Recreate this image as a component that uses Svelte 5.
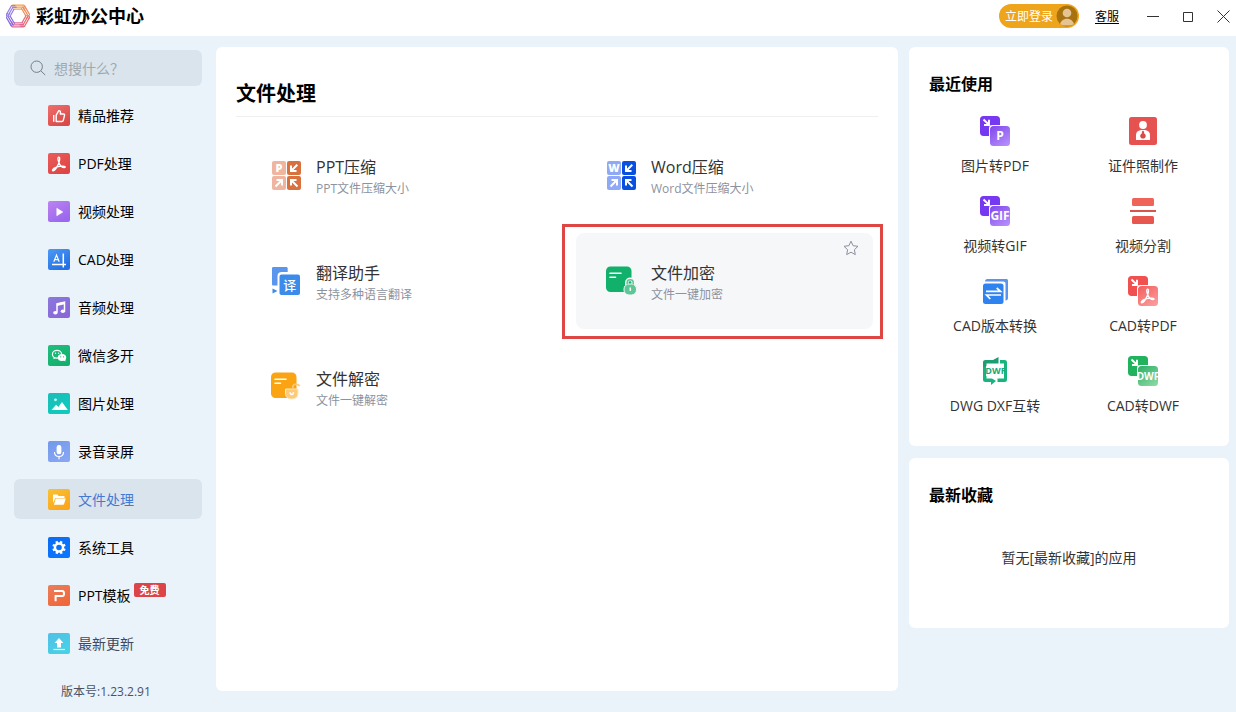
<script>
  const nav = [
    { id: 'like', label: '精品推荐', from: '#f0706c', to: '#d9494a' },
    { id: 'pdf', label: 'PDF处理', from: '#e85d5b', to: '#e04545' },
    { id: 'video', label: '视频处理', from: '#bd83f0', to: '#9a67ee' },
    { id: 'cad', label: 'CAD处理', from: '#4c9af5', to: '#2470e4' },
    { id: 'music', label: '音频处理', from: '#8a78dd', to: '#8a68d8' },
    { id: 'wechat', label: '微信多开', from: '#22bd80', to: '#12b06c' },
    { id: 'image', label: '图片处理', from: '#1cbcb8', to: '#0fcbbd' },
    { id: 'mic', label: '录音录屏', from: '#7399ea', to: '#86a6f4' },
    { id: 'folder', label: '文件处理', from: '#f8c234', to: '#fba51a' },
    { id: 'gear', label: '系统工具', from: '#0a6cf2', to: '#0a76ff' },
    { id: 'ppt', label: 'PPT模板', from: '#ea7e5c', to: '#f0673a', badge: '免费' },
    { id: 'update', label: '最新更新', from: '#52bfe6', to: '#46d2e6', muted: true }
  ];
  const tools = [
    { id: 'pptzip', title: 'PPT压缩', note: 'PPT文件压缩大小' },
    { id: 'wordzip', title: 'Word压缩', note: 'Word文件压缩大小' },
    { id: 'translate', title: '翻译助手', note: '支持多种语言翻译' },
    { id: 'lock', title: '文件加密', note: '文件一键加密', marked: true },
    { id: 'unlock', title: '文件解密', note: '文件一键解密' }
  ];
  const recent = [
    { id: 'pair', label: '图片转PDF', back: '#7638f0', from: '#8046ea', to: '#b18bfa', tag: 'P', size: 12 },
    { id: 'photo', label: '证件照制作' },
    { id: 'pair', label: '视频转GIF', back: '#7638f0', from: '#8046ea', to: '#b18bfa', tag: 'GIF', size: 12 },
    { id: 'split', label: '视频分割' },
    { id: 'version', label: 'CAD版本转换' },
    { id: 'pair', label: 'CAD转PDF', back: '#f0504f', from: '#f25c5c', to: '#fa9a98' },
    { id: 'swap', label: 'DWG DXF互转' },
    { id: 'pair', label: 'CAD转DWF', back: '#20b25c', from: '#2bae64', to: '#86d6a0', tag: 'DWF', size: 10 }
  ];
  const hexEdges = [
    { a: 0, c: '#eea04e' }, { a: 60, c: '#f08a5c' }, { a: 120, c: '#ea6a70' },
    { a: 180, c: '#dc6a9c' }, { a: 240, c: '#8468e0' }, { a: 300, c: '#9a84e6' }
  ];
  let active = $state('folder');
</script>

{#snippet acrobat()}
  <path d="M10.600 4.200c1.500-.6 1.400 2.200.3 5.400-1.300 3.600-4 8-5.700 8.200-1.500.2-.6-2.100 2.600-3.400 2.800-1.100 8.300-2 9.300-.8.800 1.200-1.800 1.500-3.800-.2-2.200-1.900-4.500-8.300-2.700-9.200Z" fill="none" stroke="#fff" stroke-width="1.300" stroke-linejoin="round" />
{/snippet}

{#snippet navIcon(item)}
  <svg class="nav-icon" viewBox="0 0 22 22" aria-hidden="true">
    <defs>
      <linearGradient id={'n-' + item.id} x1="0" y1="0" x2="0.6" y2="1">
        <stop offset="0" stop-color={item.from} /><stop offset="1" stop-color={item.to} />
      </linearGradient>
    </defs>
    <rect width="22" height="21" rx="2" fill="url(#n-{item.id})" />
    {#if item.id === 'like'}
      <path d="M8.200 10.200 10.800 5.600c1.700 0 1.900 1.300 1.500 3.400h3.200c.9 0 1.200.6 1 1.400l-1.200 4.900c-.2.8-.7 1.200-1.500 1.200H8.200ZM5.700 10v6.800" fill="none" stroke="#fff" stroke-width="1.400" stroke-linejoin="round" />
    {:else if item.id === 'pdf'}
      {@render acrobat()}
    {:else if item.id === 'video'}
      <path d="M8.800 7.300 14.800 11l-6 3.700Z" fill="#fff" stroke="#fff" stroke-width="0.600" stroke-linejoin="round" />
    {:else if item.id === 'cad'}
      <path d="M4 15.500h14M15.300 4.500v14" stroke="#fff" stroke-width="1.500" />
      <path d="m5.800 12.700 2.700-6.600 2.700 6.600M6.700 10.600h3.600" fill="none" stroke="#fff" stroke-width="1.200" />
    {:else if item.id === 'music'}
      <path d="M9 15.500V6.900l7.500-1.800v9" fill="none" stroke="#fff" stroke-width="1.500" />
      <path d="M9 6.500 16.500 4.700v2.500L9 9Z" fill="#fff" />
      <ellipse cx="7.400" cy="15.700" rx="2.200" ry="1.700" fill="#fff" /><ellipse cx="14.900" cy="14.300" rx="2.200" ry="1.700" fill="#fff" />
    {:else if item.id === 'wechat'}
      <ellipse cx="9" cy="9.300" rx="4.600" ry="3.900" fill="none" stroke="#fff" stroke-width="1.200" />
      <path d="m5.800 12.300-.5 2 2.200-1Z" fill="#fff" />
      <ellipse cx="14" cy="12.500" rx="4.200" ry="3.500" fill="#fff" />
      <path d="m15.500 15.200 2 1.200-.3-2.300Z" fill="#fff" />
      <circle cx="7.500" cy="8.300" r="0.700" fill="#fff" /><circle cx="10.600" cy="8.300" r="0.700" fill="#fff" />
      <circle cx="12.700" cy="11.800" r="0.600" fill="#17b574" /><circle cx="15.500" cy="11.800" r="0.600" fill="#17b574" />
    {:else if item.id === 'image'}
      <circle cx="7.500" cy="6.800" r="1.400" fill="#d5fff9" />
      <path d="m3.500 17 4.600-5.200 2.300 2.200 3.600-5L19.800 17Z" fill="#fff" />
    {:else if item.id === 'mic'}
      <rect x="8.600" y="4" width="4.800" height="9.300" rx="2.400" fill="#fff" />
      <path d="M6.500 11c0 6 9 6 9 0M11 15.300v3" fill="none" stroke="#fff" stroke-width="1.200" />
    {:else if item.id === 'folder'}
      <path d="M5 15.300V6.600c0-.6.400-1 1-1h3.200l1.400 1.500h5c.6 0 1 .4 1 1v.8H7.300L5 14Z" fill="#fff" />
      <path d="M7.800 9.600h9.900l-1.600 5.400c-.1.500-.5.800-1 .8H5.900Z" fill="#fff" />
    {:else if item.id === 'gear'}
      <circle cx="11" cy="10.500" r="4" fill="none" stroke="#fff" stroke-width="2.400" />
      {#each [22, 67, 112, 157, 202, 247, 292, 337] as a}
        <rect x="9.800" y="3.800" width="2.400" height="2.600" fill="#fff" transform="rotate({a} 11 10.500)" />
      {/each}
    {:else if item.id === 'ppt'}
      <path d="M6 6h8.300c2.300 0 2.300 5 0 5H7.600v5.300" fill="none" stroke="#fff" stroke-width="2" />
    {:else}
      <path d="M11 5 6.600 9.900H9v4.600h4V9.900h2.400Z" fill="#fff" /><path d="M5.500 16.500h11.500" stroke="#fff" stroke-width="1.200" />
    {/if}
  </svg>
{/snippet}

{#snippet quad(dark, light, letter)}
  <rect x="1" y="1" width="14" height="14" rx="2" fill={light} />
  <rect x="16" y="1" width="14" height="14" rx="2" fill={dark} />
  <rect x="1" y="16" width="14" height="14" rx="2" fill={light} />
  <rect x="16" y="16" width="14" height="14" rx="2" fill={dark} />
  <text x="8" y="12" class="glyph" font-size="11">{letter}</text>
  <path d="m26.300 4.700-5.500 5.500M20 5.500V11h5.500" fill="none" stroke="#fff" stroke-width="2" />
  <path d="m4.500 26.500 6-6M5.500 20H11v5.500" fill="none" stroke="#fff" stroke-width="2" />
  <path d="m26.500 26.500-6-6M20 25.500V20h5.500" fill="none" stroke="#fff" stroke-width="2" />
{/snippet}

{#snippet toolIcon(id)}
  <svg class="tool-icon" viewBox="0 0 31 31" aria-hidden="true">
    {#if id === 'pptzip'}
      {@render quad('#d9713f', '#efb59f', 'P')}
    {:else if id === 'wordzip'}
      {@render quad('#0a50e0', '#8fa9f6', 'W')}
    {:else if id === 'translate'}
      <path d="M2.500 1h12.700c1 0 1.500.6 1.500 1.500V6H11C8 6 6.500 7.500 6.500 10v9.500h-4C1.500 19.500 1 19 1 18V2.500C1 1.500 1.500 1 2.500 1Z" fill="#5b95ee" />
      <rect x="8.500" y="8.500" width="20.500" height="20.500" rx="2" fill="#3b8beb" />
      <path d="m1.500 22.500 5 2.500-5 2.500Z" fill="#3b8beb" />
      <text x="18.800" y="23.800" class="glyph zh" font-size="13">译</text>
    {:else if id === 'lock'}
      <rect x="0" y="0.500" width="25.500" height="25.500" rx="4.500" fill="#11b16b" />
      <path d="M4 7.200h11M4 11.200h5.500" stroke="#fff" stroke-width="1.600" stroke-linecap="round" />
      <path d="M20.800 19v-2.500c0-4.200 6.800-4.200 6.800 0V19" fill="none" stroke="#f5f7f9" stroke-width="3.600" />
      <rect x="18" y="18" width="12.500" height="11" rx="5" fill="#5cc795" stroke="#f5f7f9" />
      <path d="M21.200 18.500v-2c0-3.600 6-3.600 6 0v2" fill="none" stroke="#5cc795" stroke-width="1.500" />
      <path d="M24.300 21.500v3.400" stroke="#fff" stroke-width="1.500" />
    {:else}
      <rect x="0" y="0.500" width="25.500" height="25.500" rx="4.500" fill="#fba413" />
      <path d="M4 7.200h11M4 11.200h5.500" stroke="#fff" stroke-width="1.600" stroke-linecap="round" />
      <path d="M14.500 17h12.500v4c0 4.500-3 6-6.300 6s-6.200-1.500-6.200-6Z" fill="#fdcb78" stroke="#ffe8c2" />
      <path d="M21.800 16.500v-1.500c0-3.600 5.500-3.600 6.800-.8" fill="none" stroke="#fdcb78" stroke-width="1.600" />
      <path d="M19 20.300c.3 3 3.200 3 3.500 0" fill="none" stroke="#fff" stroke-width="1.500" />
    {/if}
  </svg>
{/snippet}

{#snippet recentIcon(item, n)}
  <svg class="recent-icon" viewBox="0 0 30 30" aria-hidden="true">
    {#if item.id === 'pair'}
      <defs>
        <linearGradient id={'r-' + n} x1="0" y1="0" x2="0.700" y2="1">
          <stop offset="0" stop-color={item.from} /><stop offset="1" stop-color={item.to} />
        </linearGradient>
      </defs>
      <path d="M3.500 0h13C18.700 0 20 1.300 20 3.500V9h-7.500C10 9 9 10 9 12.500V20H3.500C1.300 20 0 18.700 0 16.500v-13C0 1.300 1.300 0 3.500 0Z" fill={item.back} />
      <path d="m3.500 3.500 5 4.800M9 3.800v5.200H4" fill="none" stroke="#fff" stroke-width="1.900" />
      <rect x="10" y="10" width="20" height="20" rx="3.500" fill="url(#r-{n})" />
      {#if item.tag}
        <text x="20" y="24" class="glyph tag" font-size={item.size}>{item.tag}</text>
      {:else}
        <g transform="translate(8.800 9)">{@render acrobat()}</g>
      {/if}
    {:else if item.id === 'photo'}
      <rect x="1" y="1" width="28" height="28" rx="2.500" fill="#e6524f" />
      <circle cx="15" cy="9" r="3.900" fill="#fff" />
      <path d="M8 24v-4.500c0-4 2.500-5.500 7-5.500s7 1.500 7 5.500V24Z" fill="#fff" />
      <path d="m15 14.500 1.300 1.500-.5 1.200c3.200 1.300 2.200 5.300-.8 5.300s-4-4-.8-5.300l-.5-1.200Z" fill="#d9494a" />
    {:else if item.id === 'split'}
      <rect x="4" y="2" width="22" height="8" rx="1.500" fill="#f06359" />
      <path d="M2 15h26" stroke="#d8544e" stroke-width="2" />
      <rect x="4" y="20" width="22" height="8" rx="1.500" fill="#e85650" />
    {:else if item.id === 'version'}
      <path d="M5 5.500C5 4 5.800 3 7.500 3H26c1.500 0 2 .6 2 2v17c0 1.500-.7 2.500-2.500 2.500V8c0-1.800-.5-2.500-2.500-2.500Z" fill="#5a94ec" />
      <rect x="3" y="7.500" width="20.500" height="20.500" rx="2.500" fill="#2f83f0" />
      <path d="M6 15.300h14.500L16.700 12M21 19H6.500l3.800 4" fill="none" stroke="#fff" stroke-width="1.700" />
    {:else}
      <path d="M3 19V6.500C3 4.800 3.900 4 5.500 4H13l5.500-3V7.500H6.500V11H3Z" fill="#1b9e74" />
      <path d="M20 4h4.500c1.700 0 2.500.8 2.500 2.500v17c0 1.700-.8 2.500-2.500 2.500h-7v-3.500H24V20h-3v-9h3V7.500h-4Z" fill="#17b57d" />
      <path d="M3 11v12.500C3 25.200 3.900 26 5.500 26H11v3l5-4-4-2.500H6.500V11Z" fill="#17b57d" />
      <rect x="6" y="10" width="18" height="10" fill="#fff" />
      <text x="15.500" y="18.200" class="glyph tag green" font-size="9">DWF</text>
    {/if}
  </svg>
{/snippet}

<div class="app">
  <header class="titlebar">
    <div class="brand">
      <svg class="logo" viewBox="0 0 24 24" aria-hidden="true">
        {#each hexEdges as e}
          <g transform="rotate({e.a} 12 12)" fill="none" stroke={e.c} stroke-width="1.200">
            <path d="M6.200 1.200h11.600l2 3.400M6 3.200h10.800l2 3.400M7 5.200h9" />
          </g>
        {/each}
      </svg>
      <h1>彩虹办公中心</h1>
    </div>
    <div class="actions">
      <button class="login" type="button">立即登录
        <svg viewBox="0 0 22 22" aria-hidden="true">
          <defs><clipPath id="face"><circle cx="11" cy="11" r="10.500" /></clipPath></defs>
          <circle cx="11" cy="11" r="10.500" fill="#a8720f" />
          <g clip-path="url(#face)" fill="#e5c493"><circle cx="11" cy="8" r="4.300" /><path d="M4 20.500c0-9 14-9 14 0Z" /></g>
        </svg>
      </button>
      <a class="support" href="#support">客服</a>
      <div class="window-buttons">
        <button type="button" aria-label="最小化"><svg viewBox="0 0 13 13"><path d="M0 6.500h12" /></svg></button>
        <button type="button" aria-label="最大化"><svg viewBox="0 0 13 13"><path d="M1.500 2.500h9v9h-9Z" /></svg></button>
        <button type="button" aria-label="关闭"><svg viewBox="0 0 13 13"><path d="m.5.500 12 12M12.500.500l-12 12" /></svg></button>
      </div>
    </div>
  </header>

  <div class="body">
    <aside class="sidebar">
      <label class="search">
        <svg viewBox="0 0 16 16" aria-hidden="true"><circle cx="6.700" cy="6.700" r="5.700" /><path d="m10.800 10.800 4.400 4.200" /></svg>
        <input type="text" placeholder="想搜什么？" aria-label="搜索" />
      </label>
      <nav>
        {#each nav as item}
          <button type="button" class="nav-item" class:active={active === item.id} class:muted={item.muted} onclick={() => (active = item.id)}>
            {@render navIcon(item)}
            <span class="nav-label">{item.label}{#if item.badge}<em class="badge">{item.badge}</em>{/if}</span>
          </button>
        {/each}
      </nav>
      <p class="version">版本号:1.23.2.91</p>
    </aside>

    <main class="panel main">
      <h2>文件处理</h2>
      <div class="tools">
        {#each tools as tool}
          <div class="tool" class:marked={tool.marked}>
            {@render toolIcon(tool.id)}
            <div class="tool-text">
              <h3>{tool.title}</h3>
              <p>{tool.note}</p>
            </div>
            {#if tool.marked}
              <button type="button" class="star" aria-label="收藏">
                <svg viewBox="0 0 16 16"><path d="m8 1.200 2.100 4.500 4.900.6-3.600 3.400.9 4.900L8 12.200l-4.300 2.400.9-4.900L1 6.300l4.900-.6Z" /></svg>
              </button>
              <span class="frame"></span>
            {/if}
          </div>
        {/each}
      </div>
    </main>

    <div class="side">
      <section class="panel card recent">
        <h4>最近使用</h4>
        <div class="recent-grid">
          {#each recent as item, n}
            <button type="button" class="recent-item">
              {@render recentIcon(item, n)}
              <span>{item.label}</span>
            </button>
          {/each}
        </div>
      </section>
      <section class="panel card">
        <h4>最新收藏</h4>
        <p class="empty">暂无[最新收藏]的应用</p>
      </section>
    </div>
  </div>
</div>

<style>
  :global(body) { background: #eaf2fa; }
  .app, .app * { box-sizing: border-box; }
  .app {
    min-height: 100vh;
    display: flex;
    flex-direction: column;
    font-family: "Open Sans", "Noto Sans CJK SC", sans-serif;
    font-weight: 400;
    font-size: 14px;
    color: #000;
  }
  h1, h2, h3, h4, p { margin: 0; }
  button {
    font: inherit;
    color: inherit;
    background: none;
    border: 0;
    padding: 0;
    cursor: pointer;
  }
  svg { display: block; flex: none; }
  .titlebar {
    height: 36px;
    background: #fff;
    display: flex;
    justify-content: space-between;
    padding: 0 6px 4px;
  }
  .brand, .actions, .window-buttons { display: flex; align-items: center; }
  .brand { gap: 6px; }
  .logo { width: 24px; height: 24px; }
  h1 { font-size: 18px; line-height: 24px; font-weight: 700; }
  .login {
    display: flex;
    align-items: center;
    gap: 3px;
    width: 80px;
    height: 24px;
    padding-left: 6px;
    border-radius: 12px;
    background: #eea51c;
    color: #fff;
    font-size: 12px;
  }
  .login svg { width: 22px; height: 22px; }
  .support { margin-left: 16px; font-size: 12px; color: #000; text-underline-offset: 2px; }
  .window-buttons { gap: 22px; margin-left: 28px; }
  .window-buttons svg { width: 13px; height: 13px; fill: none; stroke: #333; stroke-width: 1; }
  .body {
    flex: 1;
    display: flex;
    align-items: stretch;
    padding: 11px 7px 0 14px;
  }
  .sidebar { width: 188px; flex: none; padding-top: 3px; }
  .search {
    height: 36px;
    display: flex;
    align-items: center;
    gap: 8px;
    padding: 0 16px;
    border-radius: 6px;
    background: #dae4ec;
  }
  .search svg { width: 16px; height: 16px; fill: none; stroke: #727f8c; stroke-width: 1; }
  .search input {
    flex: 1;
    min-width: 0;
    border: 0;
    padding: 0;
    outline: 0;
    background: none;
    font: inherit;
  }
  .search input::placeholder { color: #a0a8af; opacity: 1; }
  nav { display: flex; flex-direction: column; gap: 8px; margin-top: 9px; }
  .nav-item {
    height: 40px;
    display: flex;
    align-items: center;
    gap: 8px;
    padding-top: 1px;
    padding-left: 34px;
    border-radius: 6px;
  }
  .nav-icon { width: 22px; height: 22px; }
  .nav-item.active { background: #dae4ec; color: #4479d2; }
  .nav-item.muted { color: #414a5a; }
  .nav-label { position: relative; line-height: 22px; }
  .badge {
    position: absolute;
    left: 100%;
    top: -2px;
    margin-left: 3px;
    width: 32px;
    border-radius: 2px;
    background: #dc444a;
    color: #fff;
    font-size: 10px;
    line-height: 14px;
    font-style: normal;
    font-weight: 700;
    text-align: center;
  }
  .version { margin-top: 19px; padding-left: 47px; font-size: 12px; line-height: 20px; color: #4a5262; }
  .panel { background: #fff; border-radius: 6px; }
  .main { flex: 1; margin: 0 11px 21px 14px; padding: 31px 20px; }
  h2 {
    font-size: 20px;
    line-height: 32px;
    font-weight: 700;
    padding-bottom: 6px;
    border-bottom: 1px solid #eeeff1;
  }
  .tools {
    display: grid;
    grid-template-columns: 1fr 1fr;
    gap: 10px 38px;
    padding: 10px 5px 0;
  }
  .tool {
    position: relative;
    height: 96px;
    display: flex;
    align-items: center;
    gap: 14px;
    padding-left: 30px;
    border-radius: 8px;
  }
  .tool.marked { background: #f5f7f9; }
  .tool-icon { width: 31px; height: 31px; }
  .tool-text { padding-top: 6px; }
  h3 { font-size: 16px; line-height: 22px; font-weight: 400; color: #333; }
  .tool p { font-size: 12px; line-height: 22px; color: #8d929e; }
  .star { position: absolute; top: 7px; right: 14px; }
  .star svg { width: 16px; height: 16px; fill: none; stroke: #8b909c; stroke-width: 1; }
  .frame { position: absolute; inset: -9px -10px -10px -14px; border: 3px solid #de4643; pointer-events: none; }
  .side { width: 320px; flex: none; display: flex; flex-direction: column; gap: 12px; }
  .card { padding: 25px 12px 59px; }
  .recent { padding-bottom: 29px; }
  h4 { font-size: 16px; line-height: 24px; font-weight: 700; padding-left: 8px; }
  .recent-grid { display: grid; grid-template-columns: 1fr 1fr; padding-top: 20px; row-gap: 19px; }
  .recent-item { display: flex; flex-direction: column; align-items: center; gap: 9px; color: #333; }
  .recent-item span { line-height: 22px; }
  .recent-icon { width: 30px; height: 30px; overflow: hidden; }
  .empty { margin-top: 40px; line-height: 22px; text-align: center; color: #333; }
  .glyph { fill: #fff; font-weight: 800; text-anchor: middle; }
  .tag { font-weight: 700; }
  .zh { font-weight: 500; }
  .green { fill: #17a878; }
</style>
